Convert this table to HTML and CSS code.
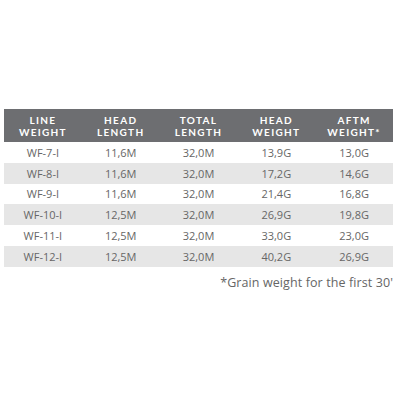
FILE: index.html
```html
<!DOCTYPE html>
<html lang="en">
<head>
<meta charset="utf-8">
<link rel="stylesheet" href="styles.css">
</head>
<body>
<div class="wrap">
  <table class="spec">
    <thead>
      <tr>
        <th><span class="l">LINE</span><span class="l">WEIGHT</span></th>
        <th><span class="l">HEAD</span><span class="l">LENGTH</span></th>
        <th><span class="l">TOTAL</span><span class="l">LENGTH</span></th>
        <th><span class="l">HEAD</span><span class="l">WEIGHT</span></th>
        <th><span class="l">AFTM</span><span class="l">WEIGHT*</span></th>
      </tr>
    </thead>
    <tbody>
      <tr><td>WF-7-I</td><td>11,6M</td><td>32,0M</td><td>13,9G</td><td>13,0G</td></tr>
      <tr class="alt"><td>WF-8-I</td><td>11,6M</td><td>32,0M</td><td>17,2G</td><td>14,6G</td></tr>
      <tr><td>WF-9-I</td><td>11,6M</td><td>32,0M</td><td>21,4G</td><td>16,8G</td></tr>
      <tr class="alt"><td>WF-10-I</td><td>12,5M</td><td>32,0M</td><td>26,9G</td><td>19,8G</td></tr>
      <tr><td>WF-11-I</td><td>12,5M</td><td>32,0M</td><td>33,0G</td><td>23,0G</td></tr>
      <tr class="alt"><td>WF-12-I</td><td>12,5M</td><td>32,0M</td><td>40,2G</td><td>26,9G</td></tr>
    </tbody>
  </table>
  <p class="note">*Grain weight for the first 30'</p>
</div>
</body>
</html>
```
FILE: styles.css
```css
html, body {
  margin: 0;
  padding: 0;
  background: #ffffff;
}
body {
  font-family: "Open Sans", "Liberation Sans", sans-serif;
  color: #666666;
}
.wrap {
  width: 400px;
  padding: 109px 0 0 4px;
  box-sizing: border-box;
}
.spec {
  width: 389px;
  border-collapse: collapse;
  table-layout: fixed;
}
.spec th {
  background: #6d6e71;
  color: #ffffff;
  font-family: Lato, "Open Sans", sans-serif;
  font-size: 10px;
  font-weight: 700;
  letter-spacing: 1.3px;
  height: 33px;
  padding: 0;
  box-sizing: border-box;
  text-align: center;
  vertical-align: middle;
}
.spec th .l {
  display: block;
  line-height: 12px;
  height: 12px;
}
.spec td {
  height: 20.8px;
  padding: 0;
  font-size: 11px;
  text-align: center;
  vertical-align: middle;
  color: #666666;
}
.spec tr.alt td {
  background: #e6e6e6;
}
.note {
  width: 389px;
  margin: 7px 0 0 0;
  text-align: right;
  font-size: 12.5px;
  letter-spacing: 0.1px;
  color: #666666;
}
```
